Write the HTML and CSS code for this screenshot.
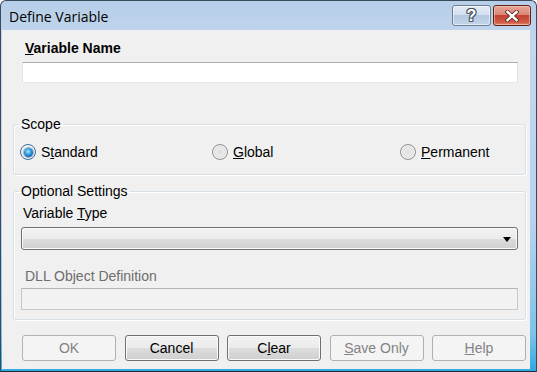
FILE: index.html
```html
<!DOCTYPE html>
<html>
<head>
<meta charset="utf-8">
<title>Define Variable</title>
<link rel="stylesheet" href="styles.css">
</head>
<body>
<div class="window">
  <div class="titlebar">
    <span class="title">Define Variable</span>
    <div class="caption-buttons">
      <span class="cap-btn cap-help"><span class="qmark">?</span></span>
      <span class="cap-btn cap-close">
        <svg width="14" height="12" viewBox="0 0 14 12">
          <path d="M2.5 2 L11.5 10 M11.5 2 L2.5 10" stroke="#5a2a22" stroke-width="4.2" stroke-linecap="square" fill="none"/>
          <path d="M2.5 2 L11.5 10 M11.5 2 L2.5 10" stroke="#ffffff" stroke-width="2.4" stroke-linecap="square" fill="none"/>
        </svg>
      </span>
    </div>
  </div>
  <div class="client">
    <div class="name-label"><u>V</u>ariable Name</div>
    <div class="textbox name-box"></div>

    <fieldset class="group scope">
      <legend>Scope</legend>
      <div class="radios">
        <label class="radio"><span class="radio-circle checked"></span><span class="radio-text">S<u>t</u>andard</span></label>
        <label class="radio"><span class="radio-circle"></span><span class="radio-text"><u>G</u>lobal</span></label>
        <label class="radio"><span class="radio-circle"></span><span class="radio-text"><u>P</u>ermanent</span></label>
      </div>
    </fieldset>

    <fieldset class="group optional">
      <legend>Optional Settings</legend>
      <div class="field-label">Variable <u>T</u>ype</div>
      <div class="combo"><span class="combo-arrow"></span></div>
      <div class="field-label dll-label">DLL Object Definition</div>
      <div class="textbox disabled-box"></div>
    </fieldset>

    <div class="buttons">
      <span class="btn disabled"><span>OK</span></span>
      <span class="btn"><span>Cancel</span></span>
      <span class="btn"><span>C<u>l</u>ear</span></span>
      <span class="btn disabled"><span><u>S</u>ave Only</span></span>
      <span class="btn disabled"><span><u>H</u>elp</span></span>
    </div>
  </div>
</div>
</body>
</html>
```

FILE: styles.css
```css
* {
  box-sizing: border-box;
}

html, body {
  margin: 0;
  padding: 0;
  background: #ffffff;
}

body {
  width: 537px;
  height: 372px;
  overflow: hidden;
  font-family: "Liberation Sans", Arial, sans-serif;
  font-size: 14px;
  color: #000000;
}

.window {
  width: 537px;
  height: 372px;
  display: flex;
  flex-direction: column;
  border: 1px solid #3b4a5b;
  border-bottom-color: #1d2c38;
  border-radius: 6px 6px 0 0;
  background: linear-gradient(to bottom, #b7cee8 0%, #c3d7ee 12%, #b6d3ef 60%, #7cc3ea 90%, #31a9e0 100%);
  padding: 0 6px 2px 1px;
}

.titlebar {
  height: 29px;
  display: flex;
  justify-content: space-between;
  align-items: flex-start;
  flex: none;
}

.title {
  font-family: "Open Sans", "Noto Sans", sans-serif;
  font-size: 14px;
  line-height: 18px;
  padding: 7px 0 0 7px;
  color: #000000;
}

.caption-buttons {
  display: flex;
  gap: 2px;
  margin-top: 4px;
  margin-right: -1px;
}

.cap-btn {
  height: 21px;
  border-radius: 3px;
  display: flex;
  align-items: center;
  justify-content: center;
}

.cap-help {
  width: 39px;
  border: 1px solid #6d7f95;
  background: linear-gradient(to bottom, #e2ebf5 0%, #d3e0ef 45%, #b4c8e0 50%, #c2d5ea 100%);
  box-shadow: inset 0 0 0 1px rgba(255, 255, 255, 0.55);
}

.qmark {
  font-family: "Liberation Sans", Arial, sans-serif;
  font-weight: bold;
  font-size: 16px;
  line-height: 16px;
  color: #ffffff;
  text-shadow: 1px 0 0 #4b5665, -1px 0 0 #4b5665, 0 1px 0 #4b5665, 0 -1px 0 #4b5665,
    1px 1px 0 #4b5665, -1px -1px 0 #4b5665, 1px -1px 0 #4b5665, -1px 1px 0 #4b5665;
}

.cap-close {
  width: 38px;
  border: 1px solid #5c2119;
  background: linear-gradient(to bottom, #e8a496 0%, #d98877 45%, #c24332 50%, #cf5a45 85%, #e08a70 100%);
  box-shadow: inset 0 0 0 1px rgba(255, 220, 210, 0.5);
}

.client {
  flex: 1;
  background: #f0f0f0;
  display: flex;
  flex-direction: column;
  padding: 10px 0 0 0;
}

.name-label {
  font-weight: bold;
  line-height: 16px;
  padding-left: 23px;
}

.textbox {
  height: 21px;
  background: #ffffff;
  border: 1px solid;
  border-color: #abadb3 #e2e3ea #e3e9ef #e2e3ea;
}

.name-box {
  margin: 6px 12px 0 20px;
}

.group {
  margin: 0 4px 0 11px;
  padding: 0 7px;
  border: 1px solid #d5dfe5;
  border-radius: 3px;
  box-shadow: inset 1px 1px 0 #ffffff, 1px 1px 0 #ffffff;
  min-width: 0;
}

.group legend {
  padding: 0 2px;
  margin-left: -2px;
  line-height: 16px;
}

.scope {
  margin-top: 33px;
  padding-top: 12px;
  padding-bottom: 14px;
}

.radios {
  display: grid;
  grid-template-columns: 192px 188px auto;
  margin-left: -1px;
}

.radio {
  display: flex;
  align-items: center;
  gap: 5px;
  height: 16px;
  line-height: 16px;
}

.radio-circle {
  width: 16px;
  height: 16px;
  border-radius: 50%;
  border: 1px solid #8f9090;
  background: radial-gradient(circle at 50% 50%, #dedede 0%, #eaeaea 40%, #d4d4d4 75%, #f4f4f4 100%);
  box-shadow: inset 0 0 0 1px #f4f4f4;
  display: flex;
  align-items: center;
  justify-content: center;
  flex: none;
}

.radio-circle.checked {
  border-color: #3c6e9c;
  background: radial-gradient(circle, #ffffff 0%, #e6eef5 60%, #c7d6e4 100%);
}

.radio-circle.checked::after {
  content: "";
  width: 9px;
  height: 9px;
  border-radius: 50%;
  background: radial-gradient(circle at 45% 40%, #b8ecff 0%, #49b3ec 30%, #0d62b2 70%, #083c7c 100%);
  box-shadow: 0 0 0 1px rgba(20, 60, 110, 0.35);
}

.optional {
  margin-top: 8px;
  padding-top: 6px;
  padding-bottom: 9px;
}

.field-label {
  line-height: 16px;
  padding-left: 2px;
}

.combo {
  margin-top: 6px;
  height: 23px;
  border: 1px solid #707070;
  border-radius: 3px;
  background: linear-gradient(to bottom, #f2f2f2 0%, #ebebeb 50%, #dddddd 50%, #cfcfcf 100%);
  box-shadow: inset 0 0 0 1px #fbfbfb;
  display: flex;
  align-items: center;
  justify-content: flex-end;
  padding-right: 6px;
}

.combo-arrow {
  width: 0;
  height: 0;
  border-left: 4px solid transparent;
  border-right: 4px solid transparent;
  border-top: 5px solid #000000;
  margin-top: 1px;
}

.dll-label {
  margin-top: 18px;
  padding-left: 4px;
  color: #6d6d6d;
}

.disabled-box {
  margin-top: 4px;
  height: 22px;
  background: #f2f2f2;
  border-color: #b3b3b3 #c8c8c8 #c8c8c8 #c8c8c8;
}

.buttons {
  margin: 15px 4px 0 20px;
  display: grid;
  grid-template-columns: repeat(5, 94px);
  justify-content: space-between;
}

.btn {
  height: 26px;
  display: flex;
  align-items: center;
  justify-content: center;
  border: 1px solid #707070;
  border-radius: 3px;
  background: linear-gradient(to bottom, #f2f2f2 0%, #ebebeb 50%, #dddddd 50%, #cfcfcf 100%);
  box-shadow: inset 0 0 0 1px #fbfbfb;
  line-height: 16px;
}

.btn.disabled {
  border-color: #adb2b5;
  background: #f4f4f4;
  box-shadow: none;
  color: #838383;
}
```
